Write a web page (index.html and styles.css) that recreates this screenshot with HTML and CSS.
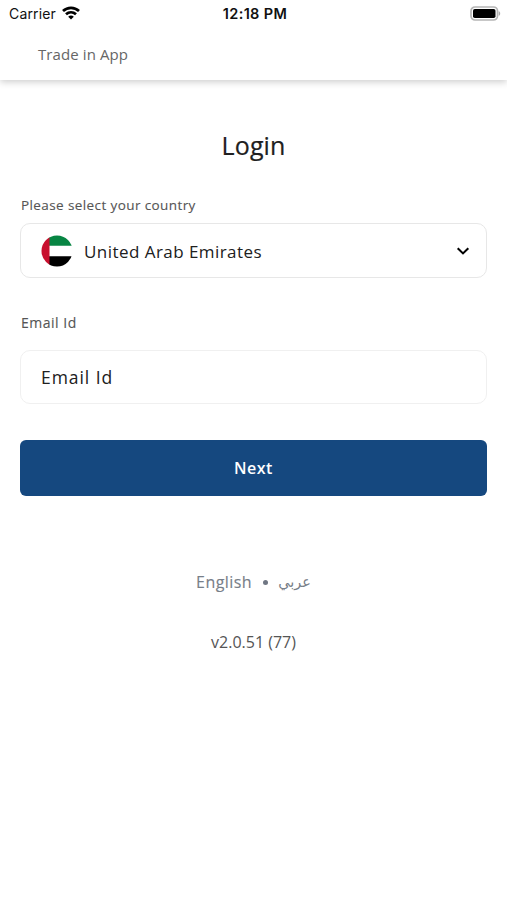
FILE: index.html
```html
<!DOCTYPE html>
<html lang="en">
<head>
<meta charset="utf-8">
<meta name="viewport" content="width=device-width, initial-scale=1">
<title>Trade in App</title>
<link rel="stylesheet" href="styles.css">
</head>
<body>
<header class="header">
  <div class="status">
    <div class="carrier"><span>Carrier</span>
      <svg class="wifi" viewBox="0 0 18 14" fill="none" stroke="#000" stroke-width="2.7"><path d="M1 5.1C5.5.8 12.500.8 17 5.100M4 8.300c2.900-2.700 7.100-2.700 10 0"/><path d="M6.200 10.700c1.600-1.500 4-1.500 5.600 0L9 13.600z" fill="#000" stroke="none"/></svg>
    </div>
    <span class="time">12:18 PM</span>
    <svg class="battery" viewBox="0 0 31 15"><rect x="1" y="1" width="26.500" height="13" rx="4" fill="#fff" stroke="#b5b5b5" stroke-width="1.700"/><rect x="3" y="3" width="22.500" height="9" rx="1.800"/><path d="M28.700 5.200c2 .7 2 3.900 0 4.600z" fill="#aaa"/></svg>
  </div>
  <div class="app-name"><span>Trade in App</span></div>
</header>
<main class="main">
  <h1 class="title"><span>Login</span></h1>
  <label class="label country-label"><span>Please select your country</span></label>
  <div class="field select">
    <svg class="flag" viewBox="0 0 32 32"><clipPath id="round"><circle cx="16" cy="16" r="15.500"/></clipPath><g clip-path="url(#round)"><path fill="#fff" d="M0 0h32v32H0z"/><path fill="#078543" d="M8 0h24v10.800H8z"/><path d="M8 21.200h24V32H8z"/><path fill="#c8102e" d="M0 0h8.500v32H0z"/></g></svg>
    <span class="value country">United Arab Emirates</span>
    <svg class="chevron" viewBox="0 0 14 10" fill="none" stroke="#000" stroke-width="2.1"><path d="M1.700 2.200 7 7.400l5.300-5.200"/></svg>
  </div>
  <label class="label email-label"><span class="email-caption">Email Id</span></label>
  <div class="field email"><span class="value email-value">Email Id</span></div>
  <button class="next"><span>Next</span></button>
  <div class="languages"><span class="english">English</span><i class="dot"></i><span class="arabic" lang="ar" dir="rtl">عربي</span></div>
  <div class="version"><span>v2.0.51 (77)</span></div>
</main>
</body>
</html>
```
FILE: styles.css
```css
* { box-sizing: border-box; }
body { margin: 0; background: #fff; color: #202020; font-family: "Open Sans", sans-serif; }
svg { display: block; flex: none; }
.header { height: 80px; background: #fff; box-shadow: 0 2px 7px rgba(0,0,0,.2); }
.status { display: grid; grid-template-columns: 1fr auto 1fr; align-items: center; height: 28px; padding: 0 6px 0 9px; font: 14px/28px Inter, sans-serif; color: #111; }
.carrier { display: flex; align-items: center; gap: 6px; letter-spacing: .15px; }
.wifi { width: 18px; height: 14px; margin-top: -2px; }
.time { font-size: 14.5px; font-weight: 600; letter-spacing: .35px; }
.battery { width: 31px; height: 15px; justify-self: end; margin-top: -1px; }
.app-name { padding-left: 38px; line-height: 52px; font-size: 15px; letter-spacing: .1px; color: #666; }
.main { display: flex; flex-direction: column; padding: 45px 20px 0; }
.title { margin: 0; text-align: center; font-size: 25px; line-height: 40px; font-weight: 400; letter-spacing: .1px; -webkit-text-stroke: .2px currentColor; }
.label { padding-left: 1px; font-size: 13.5px; line-height: 20px; letter-spacing: .4px; color: #555; -webkit-text-stroke: .12px currentColor; }
.country-label { margin-top: 30px; }
.email-caption { font-size: 14px; letter-spacing: .5px; }
.field { display: flex; align-items: center; border-radius: 10px; padding: 0 16px 0 20px; }
.select { height: 55px; margin-top: 8px; border: 1.5px solid #e7e7e7; }
.flag { width: 32px; height: 32px; }
.value { font-size: 17px; letter-spacing: .45px; }
.country { margin-left: 11px; padding-top: 1px; flex: 1; }
.chevron { width: 14px; height: 10px; }
.email-label { margin-top: 35px; }
.email { height: 54px; margin-top: 17px; border: 1px solid #f0f0f0; }
.email-value { font-size: 17.5px; letter-spacing: .95px; }
.next { height: 56px; margin-top: 35.5px; padding: 0; border: 0; border-radius: 6px; background: #15487f; color: #fff; font: 600 16px "Open Sans", sans-serif; letter-spacing: .5px; }
.languages { display: flex; align-items: center; justify-content: center; height: 28px; margin-top: 72.5px; color: #777e88; font-size: 16px; }
.english { letter-spacing: .45px; -webkit-text-stroke: .12px currentColor; }
.dot { width: 5px; height: 5px; border-radius: 50%; background: #6f7683; margin: 0 10px 0 11px; }
.arabic { font-family: "DejaVu Sans", sans-serif; font-size: 14.5px; line-height: 24px; }
.version { margin-top: 32px; text-align: center; font-size: 16px; line-height: 28px; color: #555; }
```
